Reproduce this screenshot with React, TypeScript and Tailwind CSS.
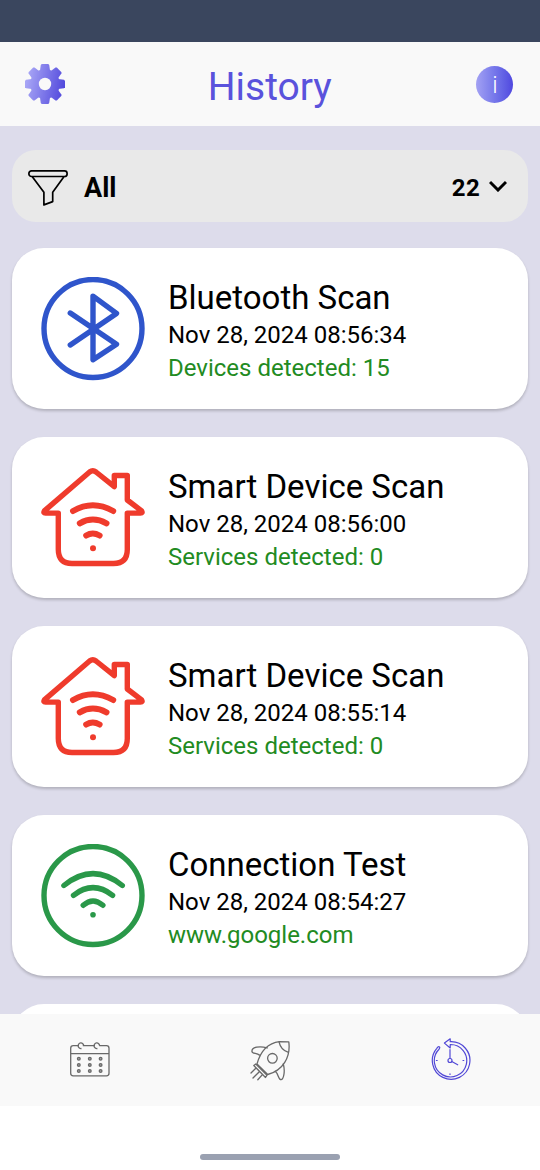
import type { ReactNode } from 'react'

type ScanKind = 'bluetooth' | 'smart' | 'connection'

interface Scan {
  kind: ScanKind
  title: string
  date: string
  result: string
}

const scans: Scan[] = [
  { kind: 'bluetooth', title: 'Bluetooth Scan', date: 'Nov 28, 2024 08:56:34', result: 'Devices detected: 15' },
  { kind: 'smart', title: 'Smart Device Scan', date: 'Nov 28, 2024 08:56:00', result: 'Services detected: 0' },
  { kind: 'smart', title: 'Smart Device Scan', date: 'Nov 28, 2024 08:55:14', result: 'Services detected: 0' },
  { kind: 'connection', title: 'Connection Test', date: 'Nov 28, 2024 08:54:27', result: 'www.google.com' },
]

function GearIcon() {
  return (
    <svg className="size-10" viewBox="0 0 40 40">
      <defs>
        <linearGradient id="gearFill" x1="0" y1="0.4" x2="1" y2="0.6">
          <stop offset="0" stopColor="#aaa8f6" />
          <stop offset="1" stopColor="#5148dc" />
        </linearGradient>
        <mask id="gearShape">
          <circle cx="20" cy="20" r="14.8" fill="white" />
          {[0, 45, 90, 135].map((angle) => (
            <path
              key={angle}
              d="M16.7 0h6.6l.9 1 .9 6v26l-.9 6-.9 1h-6.6l-.9-1-.9-6V7l.9-6z"
              fill="white"
              transform={`rotate(${angle} 20 20)`}
            />
          ))}
          <circle cx="20" cy="20" r="6.2" fill="black" />
        </mask>
      </defs>
      <rect width="40" height="40" fill="url(#gearFill)" mask="url(#gearShape)" />
    </svg>
  )
}

function FunnelIcon() {
  return (
    <svg className="mt-1 h-9 w-10" viewBox="0 0 40 36" fill="none" stroke="black" strokeWidth="1.7" strokeLinejoin="round">
      <rect x="0.9" y="0.9" width="38.2" height="5.6" rx="2.6" />
      <path d="M4.3 6.7 15.9 22.2V34.9L24.7 31.6V22.2L35.9 6.7" />
    </svg>
  )
}

function ScanIcon({ kind }: { kind: ScanKind }) {
  return (
    <svg className="size-[104px] shrink-0" viewBox="0 0 104 104" fill="none" strokeLinecap="round" strokeLinejoin="round">
      {kind === 'bluetooth' && (
        <g stroke="#2f55cb" strokeWidth="5.4">
          <circle cx="52" cy="51.5" r="49" />
          <path d="M29.3 36.1 75.5 67.2 52 82.7V19.1L75.5 36.4 29.3 67.9" />
        </g>
      )}
      {kind === 'smart' && (
        <>
          <g stroke="#ef3b2c" strokeWidth="5.4">
            <path d="M48.6 6Q51.8 3.6 55 6L73.3 20.6V9.5H86.3V34L100.6 44.9Q102 47.1 99.5 47.1H86.3V83.5Q86.3 97.5 72.5 97.5H31Q17.3 97.5 17.3 83.5V47.1H4.5Q2 47.1 3.4 44.9Z" />
            <path d="M32 45Q51.7 33.5 72.2 45M38.8 57.3Q51.7 49.8 65.5 57.3M45.2 69.5Q51.7 65.5 58.6 69.5" strokeWidth="6" />
          </g>
          <circle cx="52" cy="82.3" r="3" fill="#ef3b2c" />
        </>
      )}
      {kind === 'connection' && (
        <>
          <g stroke="#2a9849" strokeWidth="5.4">
            <circle cx="52" cy="51.5" r="49" />
            <path d="M22.9 41.5Q52 17.8 81.3 41.5M32.5 51.3Q52 36 71.6 51.3M42.2 61.3Q52 52.6 61.9 61.3" />
          </g>
          <circle cx="52" cy="70.7" r="2.8" fill="#2a9849" />
        </>
      )}
    </svg>
  )
}

function ScanCard({ scan }: { scan: Scan }) {
  return (
    <div className="flex h-[161.5px] shrink-0 rounded-[32px] bg-white pt-[29.5px] pl-[29px] shadow-[0_2px_3px_rgba(0,0,0,0.2)]">
      <ScanIcon kind={scan.kind} />
      <div className="ml-[23px] whitespace-nowrap">
        <h2 className="text-[33px] leading-[41px]">{scan.title}</h2>
        <p className="mt-px text-[24px] leading-[33px]">{scan.date}</p>
        <p className="text-[24px] leading-[33px] text-[#228b22]">{scan.result}</p>
      </div>
    </div>
  )
}

function CalendarIcon() {
  return (
    <svg className="size-[42px]" viewBox="0 0 42 42" fill="none" stroke="#696969" strokeWidth="1.3">
      <path d="M10 6.7H4.2Q1.7 6.7 1.7 9.2V34.3Q1.7 36.8 4.2 36.8H37.5Q40 36.8 40 34.3V9.2Q40 6.7 37.5 6.7H30.2M26 6.7H13.8M1.7 14.7H40" />
      <path d="M12.5 9.5A2.8 2.8 0 1 1 14.7 6.7M28.4 9.5A2.8 2.8 0 1 1 30.6 6.7" />
      {[19.7, 25.9, 32].map((y) =>
        [9.8, 20.8, 31.6].map((x) => <circle key={`${x}-${y}`} cx={x} cy={y} r="1.35" strokeWidth="1.3" fill="#aaa" />)
      )}
    </svg>
  )
}

function RocketIcon() {
  return (
    <svg className="size-[42px]" viewBox="0 0 42 42" fill="none" stroke="#696969" strokeWidth="1.3" strokeLinejoin="round" strokeLinecap="round">
      <path d="M8 25Q13.5 4.8 30.5 2.6L39.8 2.8C41.8 18 34 31.4 18.7 35.5Z" />
      <path d="M30 2.8Q31.8 11 39.4 13.3" />
      <circle cx="23.4" cy="19.3" r="4.8" />
      <path d="M18.3 8.8C10.5 6.8 2.9 7.8 2.9 12.2 2.9 14.7 7.3 14 10.5 16.1M34.3 25C36.5 33 34.3 40.5 32 40.7 29.3 41 29.7 34.8 26.2 32.3" />
      <path d="M6.8 25 18 36.2 16.5 38.5 4.8 26.5ZM6.8 29.2 2 34M10.3 32.7 4 39M13.4 35.6 8.8 40.8" />
    </svg>
  )
}

function HistoryIcon() {
  return (
    <svg className="mr-px size-[44px]" viewBox="0 0 44 44" fill="none" stroke="#5148d6" strokeWidth="1.2" strokeLinejoin="round" strokeLinecap="round">
      <path d="M22.2 3.7A18.8 18.8 0 1 1 8.8 10.3Q10.5 8 11.5 9 12.3 9.7 10.8 11.5A16.2 16.2 0 1 0 22.2 6.5V10L16.4 5.1 22.2.8Z" />
      <circle cx="22" cy="22.5" r="2" />
      <path d="M22 11.5V20.4M23.8 23.5 29.7 26.8M8.4 22.5H9.2M35 22.5H35.8M22 35.8V36.5" />
    </svg>
  )
}

function NavItem({ children }: { children: ReactNode }) {
  return <button className="flex flex-1 items-center justify-center">{children}</button>
}

export default function App() {
  return (
    <div className="flex h-[1170px] w-[540px] flex-col overflow-hidden bg-white font-['Roboto',sans-serif] text-black">
      {/* Status bar */}
      <div className="h-[42px] shrink-0 bg-[#3a465e]" />

      {/* Header */}
      <header className="flex h-[84px] shrink-0 items-center justify-between bg-[#f9f9f9] pr-[26.5px] pl-[25px]">
        <GearIcon />
        <h1 className="mr-0.5 pt-1.5 text-[39px] leading-none text-[#5a52dc]">History</h1>
        <div className="flex size-[37px] items-center justify-center rounded-full bg-gradient-to-r from-[#a3a1f3] to-[#5047df] pt-0.5 text-2xl leading-none font-light text-white">
          i
        </div>
      </header>

      {/* Scan list */}
      <main className="flex min-h-0 flex-1 flex-col overflow-hidden bg-[#dddceb] px-3 pt-6">
        <div className="flex h-[72px] shrink-0 items-center rounded-[24px] bg-[#e9e9e9] px-4 font-bold">
          <FunnelIcon />
          <span className="ml-4 pt-1 text-[27px]">All</span>
          <span className="ml-auto pt-[3px] text-[24px] tracking-[0.3px]">22</span>
          <svg className="mr-[5px] ml-[9px] h-3 w-[18px]" viewBox="0 0 18 12" fill="none" stroke="black" strokeWidth="3">
            <path d="M1 2 9 10 17 2" />
          </svg>
        </div>
        <div className="mt-[25.5px] flex flex-col gap-[27.5px]">
          {scans.map((scan) => (
            <ScanCard key={scan.date} scan={scan} />
          ))}
          <div className="h-[161px] shrink-0 rounded-[32px] bg-white" />
        </div>
      </main>

      {/* Bottom navigation */}
      <nav className="flex h-[92px] shrink-0 bg-[#f9f9f9]">
        <NavItem>
          <CalendarIcon />
        </NavItem>
        <NavItem>
          <RocketIcon />
        </NavItem>
        <NavItem>
          <HistoryIcon />
        </NavItem>
      </nav>
      <div className="flex h-16 shrink-0 items-end justify-center pb-[10px]">
        <div className="h-1.5 w-[140px] rounded-full bg-[#9aa1b1]" />
      </div>
    </div>
  )
}
